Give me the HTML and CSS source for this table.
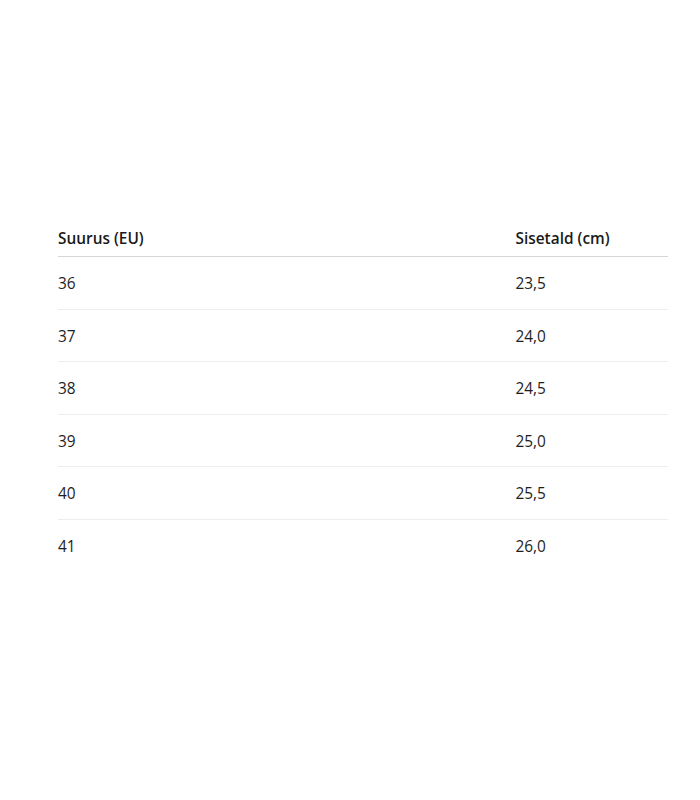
FILE: index.html
```html
<!DOCTYPE html>
<html lang="et">
<head>
<meta charset="utf-8">
<link rel="stylesheet" href="styles.css">
</head>
<body>
<div class="page">
  <table class="sizes">
    <thead>
      <tr><th class="c1">Suurus (EU)</th><th class="c2">Sisetald (cm)</th></tr>
    </thead>
    <tbody>
      <tr><td>36</td><td>23,5</td></tr>
      <tr><td>37</td><td>24,0</td></tr>
      <tr><td>38</td><td>24,5</td></tr>
      <tr><td>39</td><td>25,0</td></tr>
      <tr><td>40</td><td>25,5</td></tr>
      <tr><td>41</td><td>26,0</td></tr>
    </tbody>
  </table>
</div>
</body>
</html>
```
FILE: styles.css
```css
html, body { margin: 0; padding: 0; background: #fff; }
body { font-family: "Open Sans", "Noto Sans", sans-serif; color: #1e1e1e; font-size: 15.4px; }
.page { padding: 215px 32px 0 58px; }
.sizes { width: 610px; border-collapse: collapse; }
.sizes th { text-align: left; font-weight: 600; padding: 13px 0 7px; line-height: 21px; border-bottom: 1px solid #d6d6d6; color: #1a1a1a; }
.sizes .c1 { width: 75%; }
.sizes td { padding: 17px 0 14px; line-height: 20.5px; border-bottom: 1px solid #eeeeee; }
.sizes tbody tr:last-child td { border-bottom: none; }
```
